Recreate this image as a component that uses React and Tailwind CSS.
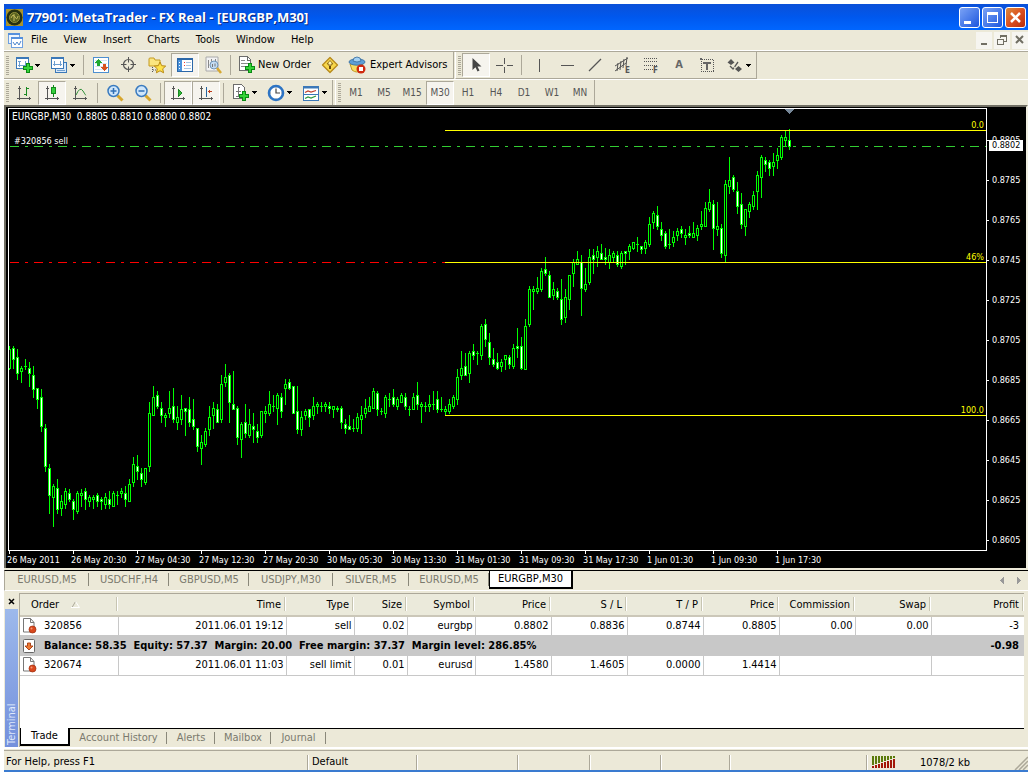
import React, { useState } from 'react';

// [high, body top, body bottom, low, bearish] measured from the top of the plot
const candles = [
  [238, 241, 261, 262, 0], [238, 240, 252, 261, 1], [241, 249, 266, 272, 1], [258, 260, 264, 275, 0], [251, 258, 259, 262, 0],
  [254, 260, 266, 279, 1], [258, 267, 282, 290, 1], [280, 280, 292, 301, 1], [281, 289, 319, 324, 1], [316, 320, 359, 364, 1],
  [356, 360, 388, 406, 1], [376, 378, 390, 419, 0], [371, 380, 402, 406, 1], [387, 393, 401, 408, 0], [380, 383, 397, 401, 0],
  [381, 385, 392, 394, 1], [391, 393, 402, 412, 1], [383, 385, 404, 406, 0], [381, 385, 388, 399, 0], [380, 383, 392, 402, 1],
  [387, 389, 394, 399, 0], [387, 389, 392, 401, 0], [385, 387, 394, 399, 1], [389, 391, 394, 402, 1], [385, 389, 397, 401, 0],
  [383, 391, 397, 401, 1], [383, 385, 399, 399, 0], [383, 387, 388, 397, 0], [380, 383, 386, 390, 0], [378, 385, 392, 399, 1],
  [371, 376, 394, 394, 0], [349, 356, 375, 379, 0], [347, 358, 364, 372, 1], [360, 365, 372, 379, 1], [360, 360, 375, 377, 0],
  [294, 305, 359, 364, 0], [278, 289, 308, 308, 0], [283, 287, 299, 301, 1], [294, 300, 308, 315, 1], [305, 307, 310, 319, 0],
  [283, 300, 306, 310, 0], [280, 298, 312, 315, 1], [298, 309, 315, 322, 0], [287, 301, 312, 317, 0], [300, 300, 304, 328, 1],
  [289, 301, 315, 319, 1], [291, 311, 319, 322, 1], [320, 320, 339, 344, 1], [327, 334, 341, 357, 0], [320, 323, 337, 339, 0],
  [298, 309, 322, 328, 0], [294, 300, 308, 321, 0], [296, 301, 315, 315, 1], [267, 276, 312, 315, 0], [256, 269, 275, 279, 0],
  [265, 267, 295, 315, 1], [263, 296, 302, 302, 1], [298, 300, 330, 337, 1], [314, 316, 332, 350, 0], [296, 314, 326, 330, 1],
  [301, 316, 328, 330, 0], [305, 318, 322, 335, 1], [316, 323, 330, 335, 1], [303, 303, 328, 330, 0], [298, 303, 306, 315, 0],
  [283, 296, 306, 308, 0], [287, 298, 299, 304, 0], [285, 287, 301, 317, 0], [285, 289, 304, 310, 1], [271, 276, 281, 297, 0],
  [271, 274, 281, 282, 1], [278, 278, 306, 306, 1], [278, 303, 322, 326, 1], [303, 309, 322, 328, 0], [301, 303, 308, 312, 0],
  [301, 301, 310, 319, 1], [289, 298, 308, 312, 0], [294, 296, 299, 306, 0], [294, 298, 299, 304, 0], [294, 296, 299, 304, 0],
  [294, 298, 301, 306, 1], [298, 298, 302, 310, 0], [298, 300, 302, 304, 1], [298, 300, 315, 321, 1], [311, 316, 321, 326, 1],
  [307, 318, 322, 322, 1], [311, 320, 321, 324, 0], [305, 309, 321, 324, 0], [298, 307, 312, 326, 0], [291, 300, 306, 310, 0],
  [289, 298, 304, 304, 0], [280, 283, 301, 301, 0], [283, 285, 302, 308, 1], [300, 303, 304, 307, 0], [287, 289, 306, 310, 0],
  [285, 291, 292, 299, 0], [281, 289, 297, 299, 1], [289, 291, 299, 302, 0], [285, 287, 295, 295, 0], [285, 289, 299, 302, 1],
  [298, 301, 302, 308, 0], [285, 289, 302, 302, 0], [274, 287, 297, 302, 1], [294, 296, 299, 315, 0], [294, 298, 299, 304, 0],
  [287, 296, 299, 304, 0], [283, 296, 297, 302, 0], [283, 291, 302, 305, 1], [289, 301, 302, 304, 0], [298, 301, 304, 307, 0],
  [291, 296, 304, 306, 0], [287, 289, 299, 301, 0], [261, 269, 292, 297, 0], [243, 260, 268, 272, 0], [245, 258, 268, 268, 1],
  [243, 245, 266, 275, 0], [236, 243, 248, 252, 1], [243, 245, 246, 257, 0], [216, 218, 248, 252, 0], [211, 216, 232, 239, 1],
  [225, 234, 250, 257, 1], [240, 251, 257, 259, 1], [245, 254, 261, 262, 1], [251, 254, 259, 264, 0], [247, 247, 252, 262, 0],
  [247, 249, 257, 261, 1], [236, 240, 259, 261, 0], [220, 238, 241, 250, 1], [229, 238, 261, 262, 1], [211, 218, 262, 262, 0],
  [178, 181, 217, 219, 0], [178, 181, 184, 202, 0], [169, 180, 184, 186, 0], [160, 163, 182, 184, 0], [149, 161, 166, 168, 1],
  [163, 167, 190, 190, 1], [174, 181, 188, 192, 0], [180, 183, 190, 192, 1], [171, 191, 212, 217, 1], [181, 189, 210, 215, 0],
  [167, 167, 192, 202, 0], [151, 154, 166, 179, 0], [143, 151, 157, 157, 0], [147, 154, 181, 208, 1], [160, 176, 182, 184, 0],
  [141, 149, 175, 177, 0], [141, 147, 152, 166, 1], [138, 143, 150, 159, 0], [136, 145, 152, 152, 1], [140, 149, 152, 157, 1],
  [141, 147, 155, 161, 0], [143, 145, 150, 154, 0], [143, 147, 157, 159, 1], [143, 145, 159, 161, 0], [143, 143, 146, 157, 1],
  [136, 138, 144, 152, 0], [134, 134, 141, 142, 0], [129, 136, 137, 144, 0], [138, 138, 142, 146, 1], [132, 134, 141, 146, 0],
  [109, 116, 137, 139, 0], [103, 105, 115, 121, 0], [98, 107, 119, 122, 1], [114, 121, 128, 133, 1], [123, 125, 139, 141, 1],
  [121, 136, 137, 141, 0], [123, 129, 135, 139, 0], [120, 123, 128, 133, 0], [118, 121, 126, 130, 1], [121, 127, 130, 137, 0],
  [118, 125, 128, 130, 1], [114, 125, 130, 130, 0], [117, 120, 128, 133, 0], [103, 116, 119, 122, 0], [94, 100, 119, 119, 0],
  [81, 94, 102, 104, 0], [92, 96, 121, 142, 1], [94, 118, 122, 128, 0], [116, 120, 146, 150, 1], [72, 76, 148, 154, 0],
  [49, 72, 79, 86, 0], [67, 69, 82, 84, 1], [74, 83, 99, 106, 1], [85, 96, 117, 121, 1], [101, 101, 119, 128, 0],
  [94, 96, 104, 110, 0], [83, 87, 99, 102, 0], [63, 67, 84, 102, 0], [47, 49, 70, 90, 0], [49, 52, 57, 64, 1],
  [52, 54, 61, 68, 1], [45, 54, 59, 68, 0], [40, 47, 53, 61, 0], [27, 29, 50, 52, 0], [23, 29, 33, 39, 0],
  [21, 32, 39, 42, 1]
];

const levels = [
  { y: 22, label: '0.0' },
  { y: 154, label: '46%' },
  { y: 307, label: '100.0' }
];

const prices = ['0.8805', '0.8785', '0.8765', '0.8745', '0.8725', '0.8705', '0.8685', '0.8665', '0.8645', '0.8625', '0.8605'];

const times = [
  '26 May 2011', '26 May 20:30', '27 May 04:30', '27 May 12:30', '27 May 20:30', '30 May 05:30', '30 May 13:30',
  '31 May 01:30', '31 May 09:30', '31 May 17:30', '1 Jun 01:30', '1 Jun 09:30', '1 Jun 17:30'
];

const chartTabs = [
  { name: 'EURUSD,M5', width: 'w-[84px]' },
  { name: 'USDCHF,H4', width: 'w-20' },
  { name: 'GBPUSD,M5', width: 'w-20' },
  { name: 'USDJPY,M30', width: 'w-[84px]' },
  { name: 'SILVER,M5', width: 'w-[76px]' },
  { name: 'EURUSD,M5', width: 'w-20' },
  { name: 'EURGBP,M30', width: 'w-[84px]' }
];

const columns = [
  { name: 'Order', width: 'w-[98px]' },
  { name: 'Time', width: 'w-[168px]' },
  { name: 'Type', width: 'w-[68px]' },
  { name: 'Size', width: 'w-[53px]' },
  { name: 'Symbol', width: 'w-[68px]' },
  { name: 'Price', width: 'w-[76px]' },
  { name: 'S / L', width: 'w-[76px]' },
  { name: 'T / P', width: 'w-[76px]' },
  { name: 'Price', width: 'w-[76px]' },
  { name: 'Commission', width: 'w-[76px]' },
  { name: 'Swap', width: 'w-[76px]' },
  { name: 'Profit', width: '' }
];

const openOrder = ['2011.06.01 19:12', 'sell', '0.02', 'eurgbp', '0.8802', '0.8836', '0.8744', '0.8805', '0.00', '0.00'];
const pendingOrder = ['2011.06.01 11:03', 'sell limit', '0.01', 'eurusd', '1.4580', '1.4605', '0.0000', '1.4414'];

function Icon({ children, w = 18, h = 18, smooth }) {
  return (
    <svg width={w} height={h} viewBox={`0 0 ${w} ${h}`} fill="none" shapeRendering={smooth ? 'auto' : 'crispEdges'} aria-hidden="true">
      {children}
    </svg>
  );
}

const Plus = ({ x, y }) => (
  <>
    <path d={`M${x + 3} ${y}h4v3h3v4h-3v3h-4v-3h-3v-4h3z`} fill="#0a8a14" />
    <path d={`M${x + 4} ${y + 1}h2v3h3v2h-3v3h-2v-3h-3v-2h3z`} fill="#35d338" />
  </>
);

const NewChartIcon = () => (
  <Icon>
    <rect x="1.500" y="1.500" width="12" height="11" fill="#fff" stroke="#3b78b8" />
    <path d="M1 1h13v2H1z" fill="#3b78b8" />
    <path d="M4.500 5v6M3 9.500h8M10.500 5v4M3 5.500h3" stroke="#6f9fd0" />
    <Plus x={8} y={7} />
  </Icon>
);

const ProfilesIcon = () => (
  <Icon>
    <rect x="5.500" y="6.500" width="11" height="10" fill="#d8e8f8" stroke="#3b78b8" />
    <rect x="1.500" y="1.500" width="12" height="11" fill="#fff" stroke="#3b78b8" />
    <path d="M1 1h13v2H1z" fill="#3b78b8" />
    <path d="M4.500 5v5M3 8.500h9M10.500 5v5M7 14.500h8" stroke="#6f9fd0" />
  </Icon>
);

const MarketWatchIcon = () => (
  <Icon>
    <rect x="1.500" y="1.500" width="15" height="15" rx="1" fill="#fff" stroke="#4d8fd0" />
    <path d="M3 4.500h12M3 7.500h12M3 10.500h12M3 13.500h12" stroke="#d5e4f2" />
    <path d="M6 3l4 4H7.500v3h-3V7H2z" fill="#20a830" />
    <path d="M12 15l4-4h-2.500V8h-3v3H8z" fill="#d8501c" />
  </Icon>
);

const DataWindowIcon = () => (
  <Icon smooth>
    <circle cx="8.500" cy="8.500" r="5" stroke="#555" strokeWidth="1.200" />
    <path d="M8.500 1v5.500M8.500 10.500V16M1 8.500h5.500M10.500 8.500H16" stroke="#555" />
  </Icon>
);

const FolderIcon = () => (
  <Icon smooth>
    <path d="M1 3q0-1 1-1h4l1 2h5v6H1z" fill="#fbe680" stroke="#c49a22" />
    <path d="M4.500 11v5M5 14h4" stroke="#555" strokeDasharray="1 1" />
    <path d="M12 6l1.700 3.700 4 .4-3 2.700.9 4-3.600-2-3.600 2 .9-4-3-2.700 4-.4z" fill="#ffe24a" stroke="#b98a14" />
  </Icon>
);

const NavigatorIcon = () => (
  <Icon>
    <rect x="1.500" y="2.500" width="15" height="13" fill="#fff" stroke="#2c67a8" />
    <path d="M1 2h16v2H1z" fill="#2c67a8" />
    <path d="M2 4h4v11H2z" fill="#4c93dc" />
    <path d="M3 6.500h1M3 9.500h1M3 12.500h1" stroke="#fff" />
    <path d="M8 6.500h1M8 9.500h1" stroke="#e33" />
    <path d="M10 6.500h5M10 9.500h5M8 12.500h7" stroke="#a9c6e4" />
  </Icon>
);

const TesterIcon = () => (
  <Icon smooth>
    <path d="M2 1h12v14H2z" fill="#f2f2f2" stroke="#aaa" />
    <path d="M4.500 4v8M7.500 3v3M11.500 3v3" stroke="#888" />
    <circle cx="10" cy="9" r="4" fill="#c5ddf3" stroke="#7397b8" />
    <path d="M8.500 8v3M11 7.500v3" stroke="#777" />
    <path d="M13 12l4 5" stroke="#d6a832" strokeWidth="2.500" />
  </Icon>
);

const NewOrderIcon = () => (
  <Icon>
    <path d="M1.500.5h8l3 3v11h-11z" fill="#fff" stroke="#6c6c6c" />
    <path d="M9.500 1v3h3" stroke="#6c6c6c" />
    <path d="M3 4.500h4M3 7.500h7M3 10.500h4" stroke="#8a8a8a" />
    <Plus x={7} y={7} />
  </Icon>
);

const WarningIcon = () => (
  <Icon smooth>
    <path d="M9 1.500L16.500 9 9 16.500 1.500 9z" fill="#f8d84b" stroke="#b78a1c" strokeLinejoin="round" strokeWidth="1.300" />
    <path d="M9 4.500l3 3.500h-2v2H8V8H6z" fill="#fff3a8" stroke="#7d5a10" strokeWidth=".8" />
    <path d="M9 10v3" stroke="#6b4a0c" strokeWidth="2" />
  </Icon>
);

const ExpertIcon = () => (
  <Icon smooth>
    <path d="M2 8l2 6q5 4 9 0l2-7z" fill="#f5dc62" stroke="#c19a25" />
    <ellipse cx="9" cy="6" rx="8" ry="3.200" fill="#5d9ed6" stroke="#34699c" strokeWidth=".8" />
    <path d="M5 5q0-4 4-4t4 4q-4 2-8 0z" fill="#a3d0f3" stroke="#34699c" strokeWidth=".8" />
    <circle cx="13" cy="13" r="4.500" fill="#cf2a10" />
    <rect x="11" y="11" width="4" height="4" fill="#fff" />
  </Icon>
);

const CursorIcon = () => (
  <Icon smooth>
    <path d="M5.500 2v12l3-2.800 2 4.300 2-1-2-4h4z" fill="#444" />
  </Icon>
);

const CrossIcon = () => (
  <Icon>
    <path d="M9.500 2v6M9.500 11v6M1 9.500h6.500M12 9.500h6" stroke="#555" />
  </Icon>
);

const VLineIcon = () => <Icon><path d="M9.500 3v13" stroke="#555" /></Icon>;
const HLineIcon = () => <Icon><path d="M3 9.500h13" stroke="#555" /></Icon>;
const TrendIcon = () => <Icon smooth><path d="M3 15L15 3" stroke="#555" strokeWidth="1.300" /></Icon>;

const ChannelIcon = () => (
  <Icon smooth>
    <path d="M1 10L14 2M1 15l11-8M4 7l-1 8M7 5L6 14M10 3L9 12M13 1l-1 9" stroke="#555" />
    <text x="11" y="17" className="font-bold text-[8px]" fill="#555">E</text>
  </Icon>
);

const FiboIcon = () => (
  <Icon>
    <path d="M2 2.500h13M2 5.500h13M2 9.500h13M2 13.500h9" stroke="#555" strokeDasharray="1 1" />
    <text x="11" y="17" className="font-bold text-[8px]" fill="#555">F</text>
  </Icon>
);

const LabelIcon = () => (
  <Icon>
    <rect x="3.500" y="3.500" width="12" height="12" stroke="#555" strokeDasharray="1 1" />
    <path d="M2 2h2v2H2zM5 6h8v2h-3v6H8V8H5z" fill="#666" />
  </Icon>
);

const ArrowsIcon = () => (
  <Icon smooth>
    <path d="M5 3l3.500 3.500L5 9 1.500 6.500zM12.500 10l3.500 3-3.500 3L9 13z" fill="#555" />
    <path d="M4 10l3 3 5-7" stroke="#555" strokeWidth="1.300" strokeDasharray="6 1" />
  </Icon>
);

const Axes = () => <path d="M4.500 2v14M2 14.500h14M3 4.500h3M14.500 13v3" stroke="#555" />;

const BarsIcon = () => (
  <Icon>
    <Axes />
    <path d="M11.500 3v9M9 10.500h2M12 4.500h2" stroke="#1a8a22" />
  </Icon>
);

const CandlesIcon = () => (
  <Icon>
    <Axes />
    <path d="M10.500 1v12" stroke="#138a1c" />
    <rect x="8.500" y="3.500" width="4" height="6" fill="#35cf3c" stroke="#138a1c" />
  </Icon>
);

const LineIcon = () => (
  <Icon>
    <Axes />
    <path d="M5 11q4-9 7-4t3 4" stroke="#2f8f38" shapeRendering="auto" />
  </Icon>
);

function ZoomIcon({ plus }) {
  return (
    <Icon smooth>
      <path d="M11.500 11.500l5 5" stroke="#d7a62c" strokeWidth="3" />
      <circle cx="7.500" cy="7" r="5.500" fill="#cfe6fa" stroke="#3a7bbf" strokeWidth="1.500" />
      <path d={plus ? 'M4.500 7h6M7.500 4v6' : 'M4.500 7h6'} stroke="#2f6fb5" strokeWidth="1.500" />
    </Icon>
  );
}

const ScrollIcon = () => (
  <Icon>
    <Axes />
    <path d="M9 5l4 4-4 4z" fill="#35b33c" stroke="#178a20" />
  </Icon>
);

const ShiftIcon = () => (
  <Icon>
    <Axes />
    <path d="M9.500 3v10" stroke="#26659f" />
    <path d="M15 7.500h-4M12.500 6v3" stroke="#c03c1a" />
  </Icon>
);

const IndicatorsIcon = () => (
  <Icon>
    <path d="M1.500.5h8l3 3v11h-11z" fill="#fff" stroke="#6c6c6c" />
    <path d="M8 3.500H6.500V12H4M4 7.500h5" stroke="#777" />
    <Plus x={7} y={7} />
  </Icon>
);

const ClockIcon = () => (
  <Icon smooth>
    <circle cx="9" cy="9" r="7" fill="#fff" stroke="#2d74c4" strokeWidth="2.600" />
    <path d="M9 4.500V9h4" stroke="#444" strokeWidth="1.200" />
    <path d="M9 3v1M9 14v1M3 9h1M14 9h1" stroke="#999" />
  </Icon>
);

const TemplateIcon = () => (
  <Icon smooth>
    <rect x="1.500" y="2.500" width="15" height="14" fill="#fff" stroke="#3b78b8" />
    <path d="M1 2h16v2.500H1z" fill="#3b78b8" />
    <path d="M1 10.500h16" stroke="#3b78b8" />
    <path d="M3 8.500l3-1.500 3 1 5-1.500" stroke="#c0402c" strokeWidth="1.200" />
    <path d="M3 14.500l3-1.500 3 1 5-2" stroke="#2c9a3c" strokeWidth="1.200" />
  </Icon>
);

const DocIcon = () => (
  <Icon w={16} h={16} smooth>
    <path d="M1.500.5h7l3.500 4v9.500h-10.500z" fill="#fff" stroke="#777" />
    <path d="M8.500.5v4h3.500" stroke="#777" />
    <circle cx="10.500" cy="11.500" r="3.500" fill="#d9481e" stroke="#9c2d0c" strokeWidth=".7" />
    <circle cx="9.500" cy="10.500" r="1" fill="#f49a78" />
  </Icon>
);

const BalanceIcon = () => (
  <Icon w={16} h={16} smooth>
    <rect x="1.500" y="1.500" width="11" height="13" rx="1" fill="#fff" stroke="#666" />
    <path d="M5.500 5h3v3H11l-4 4-4-4h2.500z" fill="#ee7a33" stroke="#a63a10" strokeWidth=".9" />
  </Icon>
);

const AppIcon = () => (
  <Icon w={17} h={17} smooth>
    <rect width="17" height="17" fill="#a8932c" />
    <circle cx="8.500" cy="8.500" r="8" fill="#26300f" />
    <circle cx="8.500" cy="8.500" r="5" fill="#596220" stroke="#93923c" />
    <path d="M5 9q2-5 4-1t3-1M8 5v7" stroke="#c6bd5e" />
  </Icon>
);

const ChartWindowIcon = () => (
  <Icon w={16} h={16}>
    <rect x="1.500" y="1.500" width="11" height="10" fill="#eef5fd" stroke="#6fa0e0" />
    <path d="M1 1h12v2H1z" fill="#5590dd" />
    <rect x="4.500" y="5.500" width="11" height="10" fill="#fff" stroke="#6fa0e0" />
    <path d="M4 5h12v2H4z" fill="#5590dd" />
    <path d="M6 10l2 3 2-3 2 3 2-4" stroke="#4c86cc" shapeRendering="auto" />
  </Icon>
);

const Caret = () => (
  <svg width="5" height="3" viewBox="0 0 5 3" shapeRendering="crispEdges" aria-hidden="true"><path d="M0 0h5L2.500 3z" fill="#000" /></svg>
);

const Grip = () => (
  <span className="ml-[2px] mr-px flex w-[3px] flex-col gap-px">
    {Array.from({ length: 10 }, (_, i) => <span key={i} className="h-px w-full bg-[#aca899]" />)}
  </span>
);

const Separator = () => <span className="mx-[3px] h-5 w-px bg-[#aca899]" />;

function ToolButton({ label, children, pressed, caret, className = '' }) {
  return (
    <button
      type="button"
      aria-label={label}
      aria-pressed={pressed}
      className={`flex h-6 shrink-0 items-center justify-center border ${caret ? 'w-[35px] gap-[2px]' : 'w-7'} ${
        pressed ? 'border-t-[#aca899] border-l-[#aca899] border-r-white border-b-white bg-[#f6f4ee]' : 'border-transparent'
      } ${className}`}
    >
      {children}
      {caret && <Caret />}
    </button>
  );
}

function TitleBar() {
  const glass = 'flex h-[21px] w-[21px] items-center justify-center rounded-[3px] border border-white';
  return (
    <header className="flex h-[26px] shrink-0 items-center justify-between bg-linear-to-b from-[#0a50d8] via-[#0058ee] to-[#0066ff] px-[2px]">
      <div className="flex items-center gap-1">
        <AppIcon />
        <h1 className="font-['Open_Sans',sans-serif] text-[13px] font-bold text-white [text-shadow:1px_1px_#0a2a80]">
          77901: MetaTrader - FX Real - [EURGBP,M30]
        </h1>
      </div>
      <div className="flex gap-[2px]">
        <button type="button" aria-label="Minimize" className={`${glass} bg-linear-to-br from-[#7ba2f5] to-[#1c54dd]`}>
          <Icon w={19} h={19}><path d="M4 13h7v3H4z" fill="#fff" /></Icon>
        </button>
        <button type="button" aria-label="Maximize" className={`${glass} bg-linear-to-br from-[#7ba2f5] to-[#1c54dd]`}>
          <Icon w={19} h={19}><path d="M4 4h11v11H4zM5 7v7h9V7z" fill="#fff" fillRule="evenodd" /></Icon>
        </button>
        <button type="button" aria-label="Close" className={`${glass} bg-linear-to-br from-[#d98a3c] via-[#dc5020] to-[#b82c08]`}>
          <Icon w={19} h={19} smooth><path d="M5 5l9 9M14 5l-9 9" stroke="#fff" strokeWidth="2.500" /></Icon>
        </button>
      </div>
    </header>
  );
}

function MenuBar() {
  const box = 'flex h-[17px] w-4 items-center justify-center bg-[#f6f5f0]';
  return (
    <nav className="flex h-[21px] shrink-0 items-center justify-between border-b border-white pl-[3px]">
      <div className="flex items-center">
        <ChartWindowIcon />
        <div className="flex">
          {['File', 'View', 'Insert', 'Charts', 'Tools', 'Window', 'Help'].map(name => (
            <button key={name} type="button" className="px-2">{name}</button>
          ))}
        </div>
      </div>
      <div className="flex gap-[2px]">
        <button type="button" aria-label="Minimize chart" className={box}><Icon w={12} h={12}><path d="M3 9h6v2H3z" fill="#716f64" /></Icon></button>
        <button type="button" aria-label="Restore chart" className={box}><Icon w={12} h={12}><path d="M4 4V1.500h6.500V7H8M1.500 5h6v5h-6zM1 5.500h7M4 2h7" stroke="#716f64" /></Icon></button>
        <button type="button" aria-label="Close chart" className={box}><Icon w={12} h={12} smooth><path d="M2 2l7 7M9 2L2 9" stroke="#716f64" strokeWidth="2" /></Icon></button>
      </div>
    </nav>
  );
}

function Toolbars() {
  const [frame, setFrame] = useState('M30');
  return (
    <div className="shrink-0 border-t border-[#aca899]">
      <div className="flex h-[27px]">
        <div className="flex items-center border-r border-b border-[#aca899]">
          <Grip />
          <ToolButton label="New chart" caret><NewChartIcon /></ToolButton>
          <ToolButton label="Profiles" caret><ProfilesIcon /></ToolButton>
          <Separator />
          <ToolButton label="Market Watch"><MarketWatchIcon /></ToolButton>
          <ToolButton label="Data Window"><DataWindowIcon /></ToolButton>
          <ToolButton label="Favorites"><FolderIcon /></ToolButton>
          <ToolButton label="Navigator" pressed><NavigatorIcon /></ToolButton>
          <ToolButton label="Strategy Tester"><TesterIcon /></ToolButton>
          <Separator />
          <button type="button" className="flex w-[82px] items-center gap-[2px] pl-1 whitespace-nowrap"><NewOrderIcon />New Order</button>
          <ToolButton label="MetaEditor"><WarningIcon /></ToolButton>
          <button type="button" className="flex w-[109px] items-center gap-1 pl-1 whitespace-nowrap"><ExpertIcon />Expert Advisors</button>
        </div>
        <div className="ml-px flex items-center border-r border-b border-l border-l-white border-[#aca899]">
          <Grip />
          <ToolButton label="Cursor" pressed><CursorIcon /></ToolButton>
          <ToolButton label="Crosshair"><CrossIcon /></ToolButton>
          <Separator />
          <ToolButton label="Vertical line"><VLineIcon /></ToolButton>
          <ToolButton label="Horizontal line"><HLineIcon /></ToolButton>
          <ToolButton label="Trendline"><TrendIcon /></ToolButton>
          <ToolButton label="Equidistant channel"><ChannelIcon /></ToolButton>
          <ToolButton label="Fibonacci retracement"><FiboIcon /></ToolButton>
          <ToolButton label="Text" className="font-bold text-[#666]">A</ToolButton>
          <ToolButton label="Text label"><LabelIcon /></ToolButton>
          <ToolButton label="Arrows" caret><ArrowsIcon /></ToolButton>
        </div>
      </div>
      <div className="flex h-[26px] border-t border-white">
        <div className="flex items-center border-r border-[#aca899]">
          <Grip />
          <ToolButton label="Bar chart"><BarsIcon /></ToolButton>
          <ToolButton label="Candlesticks" pressed><CandlesIcon /></ToolButton>
          <ToolButton label="Line chart"><LineIcon /></ToolButton>
          <Separator />
          <ToolButton label="Zoom in"><ZoomIcon plus /></ToolButton>
          <ToolButton label="Zoom out"><ZoomIcon /></ToolButton>
          <Separator />
          <ToolButton label="Auto scroll" pressed><ScrollIcon /></ToolButton>
          <ToolButton label="Chart shift" pressed><ShiftIcon /></ToolButton>
          <Separator />
          <ToolButton label="Indicators" caret><IndicatorsIcon /></ToolButton>
          <ToolButton label="Periodicity" caret><ClockIcon /></ToolButton>
          <ToolButton label="Templates" caret><TemplateIcon /></ToolButton>
        </div>
        <div className="ml-[2px] flex items-center border-r border-l border-l-white border-[#aca899] text-[10px] text-[#555]">
          <Grip />
          {['M1', 'M5', 'M15', 'M30', 'H1', 'H4', 'D1', 'W1', 'MN'].map(name => (
            <button
              key={name}
              type="button"
              onClick={() => setFrame(name)}
              className={`h-6 w-7 border ${
                frame === name ? 'border-t-[#aca899] border-l-[#aca899] border-r-white border-b-white bg-[#f6f4ee]' : 'border-transparent'
              }`}
            >
              {name}
            </button>
          ))}
        </div>
      </div>
    </div>
  );
}

function Candle({ index, data }) {
  const [high, top, bottom, low, bearish] = data;
  const x = index * 4;
  return (
    <g>
      <rect x={x} y={high} width="1" height={low - high} fill="#00ff00" />
      <rect x={x - 1} y={top} width="3" height={bottom - top} fill="#00ff00" />
      {bottom - top > 2 && (
        <rect x={x} y={top + 1} width="1" height={bottom - top - 2} fill={bearish ? '#fff' : '#000'} />
      )}
    </g>
  );
}

function Chart() {
  return (
    <section className="flex min-h-[300px] flex-1 flex-col overflow-hidden border-t-2 border-l-2 border-[#716f64] border-r-2 border-r-[#f1efe2] bg-black pt-px pl-[2px] text-[9px] text-white">
      <div className="flex min-h-0 flex-1">
        <div className="min-w-0 flex-1 border border-white">
          <svg className="block h-full w-full" shapeRendering="crispEdges" role="img" aria-label="EURGBP M30 price chart">
            <g transform="translate(0 -1)">
              <path d="M776 1h9l-4.500 5z" fill="#778899" />
              <line x1="1" y1="38.500" x2="100%" y2="38.500" stroke="#32cd32" strokeDasharray="9 6 3 6" />
              <line x1="1" y1="154.500" x2="436" y2="154.500" stroke="#ff0000" strokeDasharray="9 6 3 6" />
              {candles.map((data, index) => <Candle key={index} index={index} data={data} />)}
              {levels.map(level => (
                <g key={level.label}>
                  <line x1="436" y1={level.y + 0.5} x2="100%" y2={level.y + 0.5} stroke="#ffff00" />
                  <text x="100%" dx="-2" y={level.y - 2} textAnchor="end" fill="#ffff00">{level.label}</text>
                </g>
              ))}
              <text x="3" y="12" className="text-[10px]" fill="#fff" xmlSpace="preserve">EURGBP,M30  0.8805 0.8810 0.8800 0.8802</text>
              <text x="5" y="36" fill="#fff">#320856 sell</text>
            </g>
          </svg>
        </div>
        <div className="relative w-[39px] overflow-hidden pt-3">
          {prices.map(price => (
            <div key={price} className="flex h-10 items-center gap-[3px]">
              <span className="h-px w-[2px] bg-white" />
              {price}
            </div>
          ))}
          <span className="absolute top-8 left-[2px] h-[11px] w-[34px] bg-white pl-[3px] leading-[11px] text-black">0.8802</span>
        </div>
      </div>
      <div className="flex h-[17px] shrink-0">
        {times.map(time => (
          <div key={time} className="w-16 shrink-0 whitespace-nowrap">
            <div className="ml-px h-[3px] w-px bg-white" />
            <div className="-ml-px leading-[12px]">{time}</div>
          </div>
        ))}
      </div>
    </section>
  );
}

function ChartTabs() {
  const [active, setActive] = useState(6);
  return (
    <div className="mt-[2px] flex h-[21px] shrink-0 items-start justify-between border-t border-l border-t-black border-l-[#aca899] border-b border-b-white">
      <div className="flex">
        {chartTabs.map((tab, index) => (
          <button
            key={index}
            type="button"
            onClick={() => setActive(index)}
            className={`relative flex items-center justify-center ${tab.width} ${
              active === index
                ? 'h-[18px] border-r-2 border-b-2 border-l border-black bg-white text-black'
                : 'h-[17px] text-[#7b7a6e] after:absolute after:right-0 after:h-[13px] after:w-px after:bg-[#8a887a]'
            }`}
          >
            {tab.name}
          </button>
        ))}
      </div>
      <div className="flex gap-[13px] pt-[6px] pr-[7px]">
        <button type="button" aria-label="Scroll tabs left"><Icon w={4} h={7}><path d="M4 0v7L0 3.500z" fill="#999" /></Icon></button>
        <button type="button" aria-label="Scroll tabs right"><Icon w={4} h={7}><path d="M0 0v7l4-3.500z" fill="#999" /></Icon></button>
      </div>
    </div>
  );
}

function OrderCell({ id }) {
  return (
    <td className="border-r border-[#c8c8c8]">
      <span className="flex items-center gap-[6px] pl-[2px]"><DocIcon />{id}</span>
    </td>
  );
}

function Terminal() {
  const [tab, setTab] = useState('Trade');
  const cell = 'border-r border-[#c8c8c8] pr-[2px] text-right';
  return (
    <section className="mt-[2px] flex h-[156px] shrink-0 border-b-2 border-white pr-1">
      <div className="flex w-[15px] flex-col">
        <button type="button" aria-label="Close terminal" className="flex h-4 items-center justify-center">
          <Icon w={7} h={7} smooth><path d="M1 1l5 5M6 1L1 6" stroke="#000" strokeWidth="1.500" /></Icon>
        </button>
        <div className="mr-px ml-px flex w-[13px] flex-1 rotate-180 items-center justify-start bg-linear-to-t from-[#9db9eb] to-[#7490dc] pt-[2px] leading-[13px] text-[#dfe8fb] [writing-mode:vertical-rl]">
          <span className="block">Terminal</span>
        </div>
      </div>
      <div className="flex min-w-0 flex-1 flex-col border-t border-l border-[#aca899]">
        <div className="flex-1 bg-white">
          <table className="w-full table-fixed border-collapse">
            <thead>
              <tr className="h-[22px] border-b-2 border-[#cbc7b8] bg-[#ebeadb]">
                {columns.map((column, index) => (
                  <th key={index} className={`relative font-normal ${column.width} ${index ? 'pr-[5px] text-right' : 'pl-[11px] text-left'}`}>
                    {column.name}
                    {index === 0 && (
                      <svg className="ml-3 inline" width="9" height="7" viewBox="0 0 9 7" fill="none" aria-hidden="true">
                        <path d="M1 6.500L4.500.5" stroke="#aca899" />
                        <path d="M4.500.5l4 6H0" stroke="#fff" />
                      </svg>
                    )}
                    <span className="absolute top-[3px] right-0 h-[14px] w-[2px] border-l border-[#c7c5b2] bg-white" />
                  </th>
                ))}
              </tr>
            </thead>
            <tbody>
              <tr className="h-[19px]">
                <OrderCell id="320856" />
                {openOrder.map((value, index) => <td key={index} className={cell}>{value}</td>)}
                <td className="pr-[5px] text-right">-3</td>
              </tr>
              <tr className="h-[21px] bg-[#c8c8c8] font-bold">
                <td colSpan={11} className="whitespace-pre">
                  <span className="flex items-center gap-[6px] pl-[2px]">
                    <BalanceIcon />
                    {'Balance: 58.35  Equity: 57.37  Margin: 20.00  Free margin: 37.37  Margin level: 286.85%'}
                  </span>
                </td>
                <td className="pr-[5px] text-right">-0.98</td>
              </tr>
              <tr className="h-[19px] border-b border-[#c8c8c8]">
                <OrderCell id="320674" />
                {pendingOrder.map((value, index) => <td key={index} className={cell}>{value}</td>)}
                <td colSpan={2} className={cell} />
                <td />
              </tr>
            </tbody>
          </table>
        </div>
        <div className="flex h-[19px] border-t border-black text-[#7b7a6e]">
          {[
            ['Trade', 'w-[50px]'], ['Account History', 'w-[97px]'], ['Alerts', 'w-12'], ['Mailbox', 'w-14'], ['Journal', 'w-[55px]']
          ].map(([name, width]) => (
            <button
              key={name}
              type="button"
              onClick={() => setTab(name)}
              className={`relative flex h-[18px] items-center justify-center whitespace-nowrap ${width} ${
                tab === name
                  ? '-mt-px border-r-2 border-b-2 border-l border-black bg-white text-black'
                  : 'after:absolute after:right-0 after:h-3 after:w-px after:bg-[#8a887a]'
              }`}
            >
              {name}
            </button>
          ))}
        </div>
      </div>
    </section>
  );
}

function StatusBar() {
  const cell = 'h-[15px] border-l border-[#aca899] shadow-[inset_1px_0_white]';
  return (
    <footer className="mt-px flex h-[22px] shrink-0 items-end border-t border-b-2 border-t-[#aca899] border-b-[#3a7bd0]">
      <div className="h-[15px] flex-1 pl-[2px]">For Help, press F1</div>
      <div className={`${cell} w-[109px] pl-1`}>Default</div>
      <div className={`${cell} w-[101px]`} />
      <div className={`${cell} w-[72px]`} />
      <div className={`${cell} w-[71px]`} />
      <div className={`${cell} w-[69px]`} />
      <div className={`${cell} w-[137px]`} />
      <div className={`${cell} flex w-[162px] items-center pl-[5px]`}>
        <Icon w={24} h={13}>
          {Array.from({ length: 8 }, (_, i) => (
            <g key={i}>
              <rect x={i * 3} y="0" width="2" height={9 - i} fill="#5b7a0c" />
              <rect x={i * 3} y={10 - i} width="2" height={2 + i} fill="#a31708" />
            </g>
          ))}
        </Icon>
        <span className="ml-6">1078/2 kb</span>
        <span className="ml-auto self-end">
          <Icon w={14} h={14} smooth><path d="M1 14L14 1M5 14l9-9M9 14l5-5" stroke="#aca899" strokeWidth="1.500" /></Icon>
        </span>
      </div>
    </footer>
  );
}

function App() {
  return (
    <div className="flex h-screen flex-col bg-white px-1 pt-1 pb-1 font-['DejaVu_Sans_Condensed','DejaVu_Sans',sans-serif] text-[11px] leading-[14px] text-black">
      <div className="flex min-h-0 flex-1 flex-col bg-[#ece9d8]">
        <TitleBar />
        <MenuBar />
        <Toolbars />
        <Chart />
        <ChartTabs />
        <Terminal />
        <StatusBar />
      </div>
    </div>
  );
}

export default App;
